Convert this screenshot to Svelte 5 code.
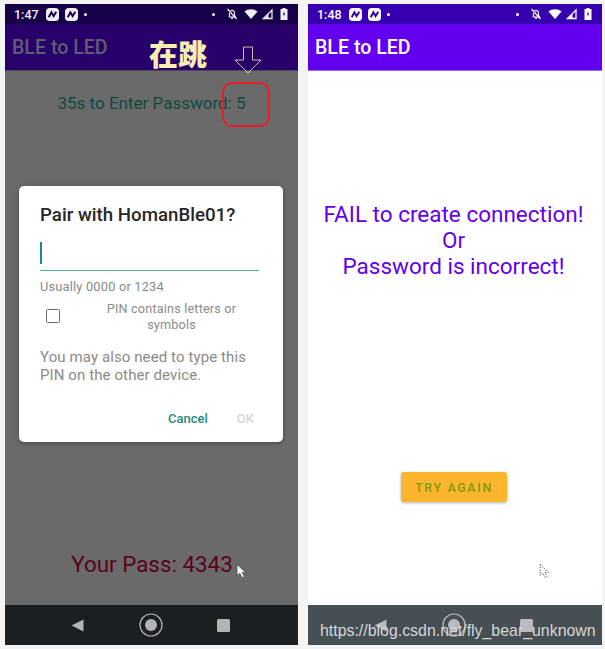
<script>
	const phones = [
		{ time: '1:47', dim: true },
		{ time: '1:48', dim: false }
	];
</script>

{#snippet statusBar(time)}
	<div class="status">
		<span class="time">{time}</span>
		{#each [0, 1] as n (n)}
			<svg class="notif" viewBox="0 0 12 12">
				<rect width="12" height="12" rx="3.5" fill="currentColor" />
				<path d="M2.5 8.5 L5 4 L7 7.5 L9.5 3.5" fill="none" stroke="var(--bar)" stroke-width="1.8" />
			</svg>
		{/each}
		<span class="dot"></span>
		<span class="grow"></span>
		<span class="dot"></span>
		<svg class="sys bell" viewBox="0 0 12 12">
			<path d="M3 9 H9.5 L8.5 7.5 V5 C8.5 3.4 7.3 2.4 6 2.4 C5.4 2.4 4.9 2.6 4.5 2.9 M3.5 5 V7.5 L3 9 M5 10.2 H7" fill="none" stroke="currentColor" stroke-width="1.2" />
			<path d="M1.5 1 L10.5 11" stroke="currentColor" stroke-width="1.2" />
		</svg>
		<svg class="sys wifi" viewBox="0 0 14 11">
			<path d="M0.5 3 C4 0 10 0 13.5 3 L7 10.5 Z" fill="currentColor" />
		</svg>
		<svg class="sys signal" viewBox="0 0 11 11">
			<path d="M10 1.5 V10 H1.5 Z" fill="none" stroke="currentColor" stroke-width="1.3" />
			<path d="M6.5 5.5 V10 H2.5 Z" fill="currentColor" />
		</svg>
		<svg class="sys battery" viewBox="0 0 8 12">
			<path d="M2.5 0 H5.5 V1 H7.5 V12 H0.5 V1 H2.5 Z" fill="currentColor" />
			<path d="M4.4 3 L2.8 6.6 H3.9 L3.6 9 L5.2 5.4 H4.1 Z" fill="var(--bar)" />
		</svg>
	</div>
{/snippet}

{#snippet navBar()}
	<div class="nav">
		<svg class="back" viewBox="0 0 13 13"><path d="M0.5 6.5 L12.5 0.5 V12.5 Z" fill="currentColor" /></svg>
		<svg class="home" viewBox="0 0 24 24">
			<circle cx="12" cy="12" r="11" fill="none" stroke="currentColor" stroke-width="1.2" />
			<circle cx="12" cy="12" r="6" fill="currentColor" />
		</svg>
		<span class="recent"></span>
	</div>
{/snippet}

<main class="page">
	<section class="phone dim">
		{@render statusBar(phones[0].time)}
		<header class="appbar">BLE to LED</header>
		<div class="content">
			<p class="countdown">35s to Enter Password: 5</p>
			<p class="pass">Your Pass: 4343</p>

			<div class="dialog">
				<h2>Pair with HomanBle01?</h2>
				<div class="field"><span class="caret"></span></div>
				<p class="hint">Usually 0000 or 1234</p>
				<div class="check">
					<span class="box"></span>
					<span class="check-label">PIN contains letters or symbols</span>
				</div>
				<p class="note">You may also need to type this PIN on the other device.</p>
				<div class="actions">
					<span class="cancel">Cancel</span>
					<span class="ok">OK</span>
				</div>
			</div>

			<svg class="cursor" viewBox="0 0 10 14">
				<path d="M1 1 V11 L3.5 9 L5.5 13 L7.5 12 L5.5 8.3 H8.5 Z" fill="#fff" stroke="#333" stroke-width="0.5" />
			</svg>
		</div>
		{@render navBar()}

		<span class="tag">在跳</span>
		<svg class="arrow" viewBox="0 0 28 28">
			<path d="M9.5 1 H18.5 V14 H27 L14 27 L1 14 H9.5 Z" fill="none" stroke="#f4f0b4" stroke-width="0.8" />
		</svg>
		<span class="ring"></span>
	</section>

	<section class="phone">
		{@render statusBar(phones[1].time)}
		<header class="appbar">BLE to LED</header>
		<div class="content">
			<p class="fail">FAIL to create connection!<br />Or<br />Password is incorrect!</p>
			<button class="retry">TRY AGAIN</button>
			<svg class="cursor ghost" viewBox="0 0 10 14">
				<path d="M1 1 V11 L3.5 9 L5.5 13 L7.5 12 L5.5 8.3 H8.5 Z" fill="none" stroke="#222" stroke-width="0.8" stroke-dasharray="1 1.4" />
			</svg>
		</div>
		{@render navBar()}
		<span class="watermark">https://blog.csdn.net/fly_bear_unknown</span>
	</section>
</main>

<style>
	:global(body) {
		margin: 0;
		background: #f4f4f4;
	}

	.page {
		width: 605px;
		height: 649px;
		box-sizing: border-box;
		padding: 4px 3px 4px 5px;
		display: flex;
		gap: 10px;
		font-family: Roboto, 'Liberation Sans', sans-serif;
		overflow: hidden;
	}

	.phone {
		--bar: #3600b0;
		position: relative;
		flex: 1;
		display: flex;
		flex-direction: column;
		background: #fff;
	}

	.phone.dim {
		--bar: #160048;
		flex: 0 0 293px;
		background: #6a6a6a;
	}

	.status {
		height: 20px;
		flex: none;
		display: flex;
		align-items: center;
		padding: 0 10px 0 9px;
		background: var(--bar);
		color: #fff;
	}

	.dim .status {
		color: #f0eef6;
	}

	.time {
		font-size: 12.5px;
		font-weight: 500;
		margin-right: 7px;
	}

	.notif {
		width: 13px;
		height: 13px;
		margin-right: 6px;
	}

	.dot {
		width: 3px;
		height: 3px;
		border-radius: 50%;
		background: currentColor;
	}

	.grow {
		flex: 1;
	}

	.sys {
		height: 12px;
		margin-left: 6px;
	}

	.bell {
		width: 12px;
		margin-left: 11px;
	}

	.wifi {
		width: 14px;
	}

	.signal {
		width: 11px;
		margin-left: 4px;
	}

	.battery {
		width: 8px;
		margin-left: 7px;
	}

	.appbar {
		height: 47px;
		flex: none;
		box-sizing: border-box;
		padding: 0 0 0 7px;
		display: flex;
		align-items: center;
		background: #6200ee;
		border-bottom: 1px solid #9a6cf0;
		color: #fff;
		font-size: 19.6px;
		font-weight: 500;
	}

	.dim .appbar {
		background: #27006a;
		border-bottom-color: #4a4a58;
		color: #615c74;
	}

	.content {
		position: relative;
		flex: 1;
		display: flex;
		flex-direction: column;
		align-items: center;
	}

	.countdown {
		margin: 22px 0 0;
		font-size: 17px;
		color: #0d4a42;
	}

	.pass {
		margin: auto 0 28px;
		padding-left: 1px;
		font-size: 22.4px;
		color: #5a0220;
	}

	.dialog {
		position: absolute;
		left: 14px;
		top: 115px;
		width: 264px;
		height: 256px;
		box-sizing: border-box;
		padding: 18px 24px 0 21px;
		border-radius: 5px;
		background: #fff;
		box-shadow: 0 1px 4px rgba(0, 0, 0, 0.35);
		color: #8a8a8a;
	}

	.dialog h2 {
		margin: 0;
		font-size: 18.7px;
		font-weight: 500;
		line-height: 22px;
		color: #262626;
	}

	.field {
		height: 28px;
		margin-top: 16px;
		border-bottom: 1.5px solid #4db6ac;
	}

	.caret {
		display: block;
		width: 2px;
		height: 22px;
		background: #1c8c7e;
	}

	.hint {
		margin: 8px 0 0;
		font-size: 12.8px;
		line-height: 16px;
		letter-spacing: 0.2px;
	}

	.check {
		display: flex;
		align-items: center;
		margin-top: 6px;
	}

	.box {
		flex: none;
		width: 12px;
		height: 12px;
		margin: 0 0 2px 6px;
		border: 1.5px solid #6f6f6f;
		border-radius: 1.5px;
	}

	.check-label {
		flex: 1;
		padding: 0 0 0 24px;
		font-size: 12.6px;
		line-height: 16px;
		letter-spacing: 0.2px;
		text-align: center;
	}

	.note {
		margin: 15px 0 0;
		font-size: 15px;
		line-height: 18px;
		letter-spacing: 0.1px;
	}

	.actions {
		position: absolute;
		right: 29px;
		bottom: 16px;
		display: flex;
		gap: 29px;
		font-size: 13px;
		font-weight: 500;
	}

	.cancel {
		color: #1c8c7e;
	}

	.ok {
		color: #d6d6d6;
	}

	.cursor {
		position: absolute;
		left: 231px;
		top: 492px;
		width: 11px;
		height: 16px;
	}

	.nav {
		height: 40px;
		flex: none;
		display: flex;
		align-items: center;
		background: #464f54;
		color: #b8bcbe;
	}

	.dim .nav {
		background: #1c1f21;
		color: #b2b4b6;
	}

	.back {
		width: 13px;
		height: 13px;
		margin-left: 66px;
	}

	.home {
		width: 24px;
		height: 24px;
		margin-left: 55px;
	}

	.recent {
		width: 13px;
		height: 13px;
		margin-left: 54px;
		border-radius: 1.5px;
		background: currentColor;
	}

	.tag {
		position: absolute;
		left: 144px;
		top: 31px;
		font-family: 'Noto Sans CJK SC', sans-serif;
		font-size: 29px;
		line-height: 36px;
		font-weight: 900;
		color: #f6eeb4;
	}

	.arrow {
		position: absolute;
		left: 229px;
		top: 42px;
		width: 28px;
		height: 28px;
	}

	.ring {
		position: absolute;
		left: 217px;
		top: 78px;
		width: 44px;
		height: 41px;
		border: 2.5px solid #ee1c25;
		border-radius: 10px;
	}

	.fail {
		margin: 130px 3px 0 0;
		font-size: 22.5px;
		line-height: 26px;
		text-align: center;
		color: #6200ee;
	}

	.retry {
		position: absolute;
		left: 93px;
		top: 401px;
		width: 106px;
		height: 30px;
		padding: 0;
		border: 0;
		border-radius: 3px;
		background: #fdb52e;
		box-shadow: 0 1px 3px rgba(0, 0, 0, 0.3);
		font: 500 12.5px Roboto, sans-serif;
		letter-spacing: 1.6px;
		color: #7f9a0c;
	}

	.watermark {
		position: absolute;
		left: 12px;
		bottom: 5px;
		font-family: 'Liberation Sans', sans-serif;
		font-size: 15.9px;
		color: #d4d6d7;
		white-space: nowrap;
	}
</style>
